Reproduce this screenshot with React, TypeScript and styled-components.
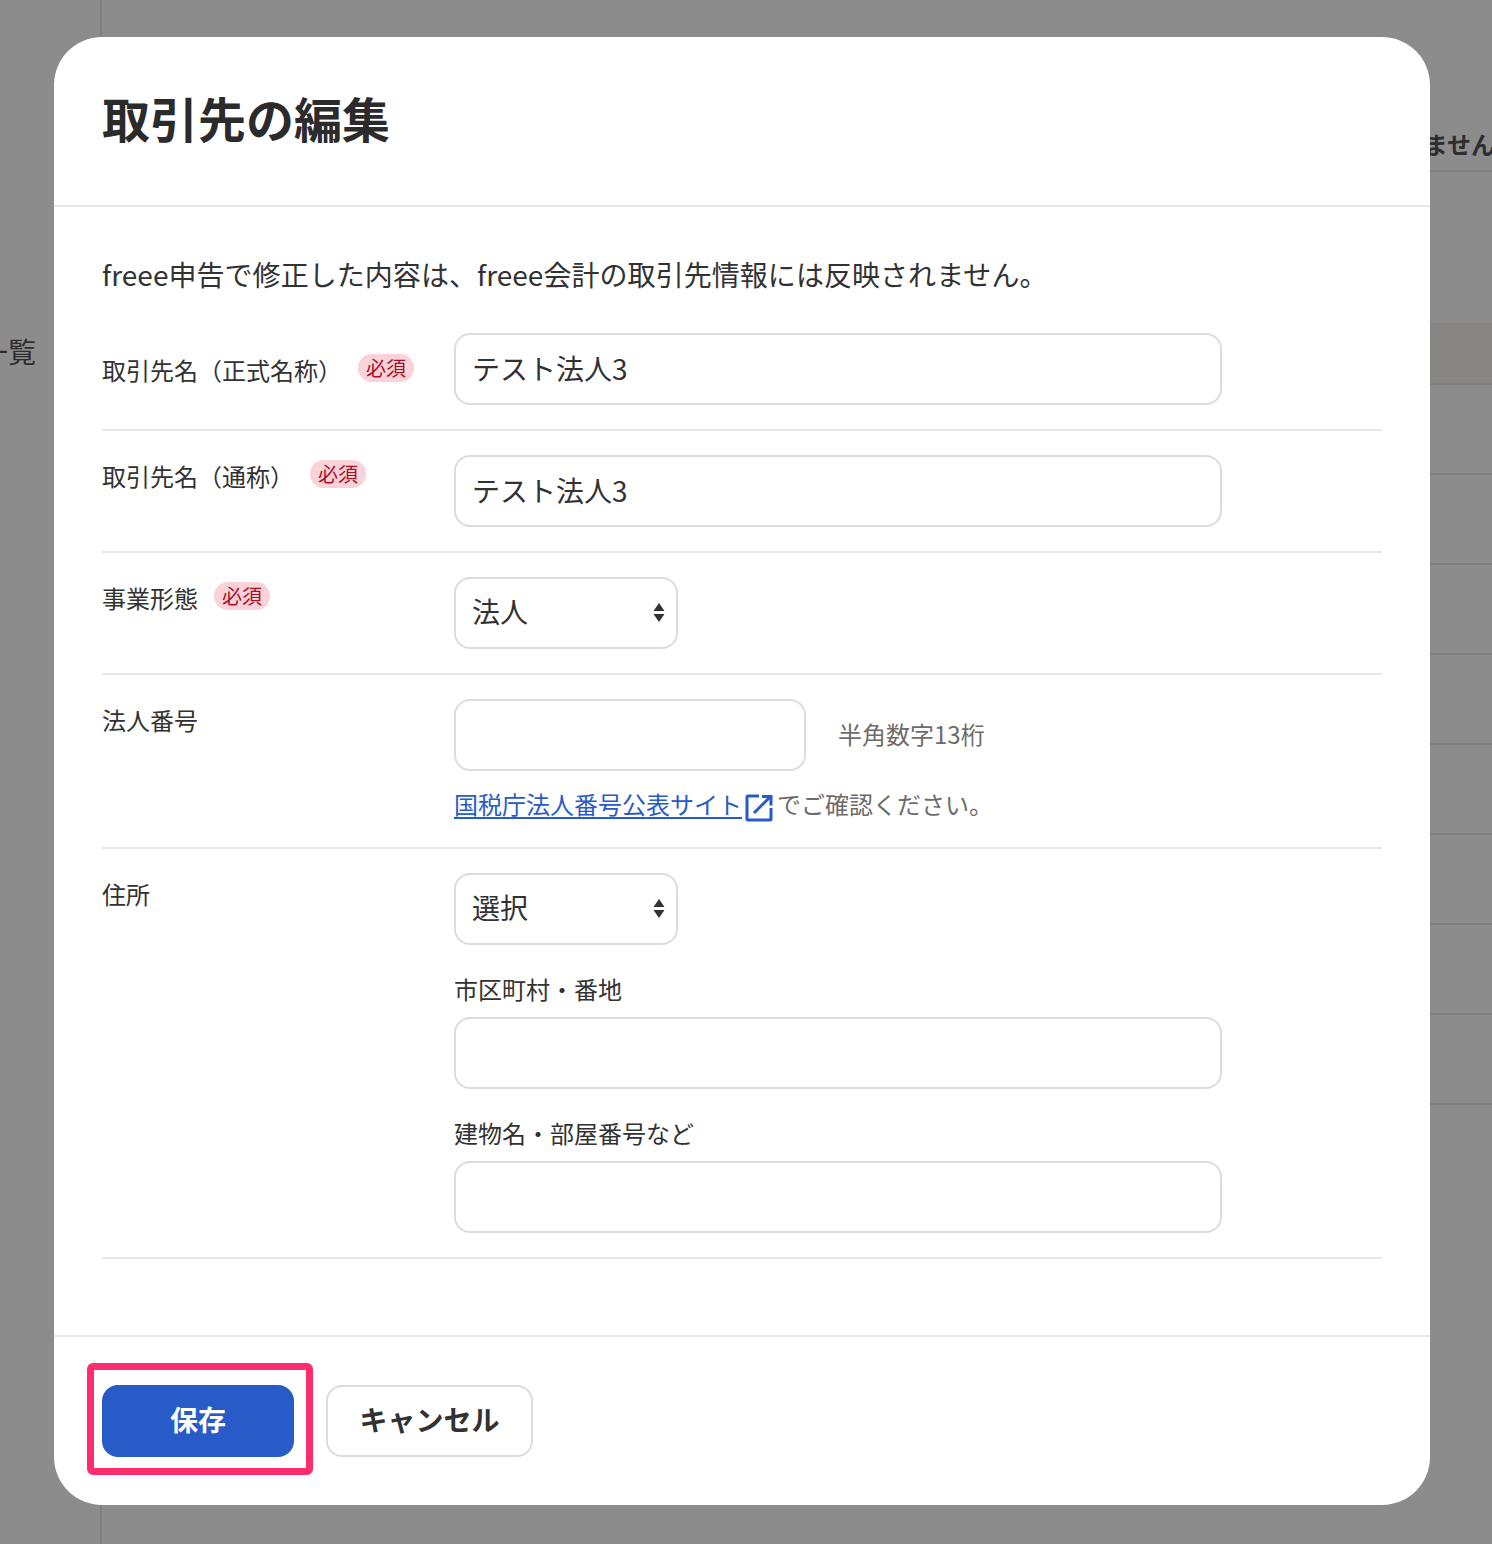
import styled, { createGlobalStyle } from "styled-components";

const GlobalStyle = createGlobalStyle`
  html, body {
    margin: 0;
    padding: 0;
  }
  body {
    font-family: "Noto Sans CJK JP", "Liberation Sans", sans-serif;
    color: #323232;
  }
  * {
    box-sizing: border-box;
  }
`;

const Page = styled.div`
  position: relative;
  display: grid;
  grid-template-columns: 102px 1fr;
  width: 1492px;
  height: 1544px;
  overflow: hidden;
  background: #fff;
`;

const Sidebar = styled.aside`
  display: flex;
  justify-content: flex-end;
  padding: 330px 64px 0 0;
  border-right: 2px solid #e7e7e7;
  overflow: hidden;
`;

const SidebarTitle = styled.div`
  flex: none;
  font-size: 28px;
  line-height: 42px;
  white-space: nowrap;
  color: #555;
`;

const Main = styled.main`
  display: flex;
  flex-direction: column;
  min-width: 0;
`;

const TableHead = styled.div`
  display: flex;
  justify-content: flex-end;
  align-items: flex-end;
  height: 172px;
  margin-bottom: 151px;
  padding-bottom: 6px;
  border-bottom: 2px solid #e7e7e7;
  overflow: hidden;
`;

const HeadCell = styled.div`
  flex: none;
  margin-right: -3px;
  font-size: 24px;
  font-weight: 700;
  line-height: 40px;
  white-space: nowrap;
  color: #555;
`;

const TableRow = styled.div<{ $active?: boolean }>`
  height: ${(p) => (p.$active ? 62 : 90)}px;
  border-bottom: 2px solid #e7e7e7;
  background: ${(p) => (p.$active ? "#f8f3f3" : "#fff")};
`;

const Overlay = styled.div`
  position: absolute;
  inset: 0;
  padding: 37px 62px 39px 54px;
  background: rgba(0, 0, 0, 0.45);
`;

const Modal = styled.form`
  display: flex;
  flex-direction: column;
  height: 100%;
  border-radius: 48px;
  background: #fff;
  overflow: hidden;
`;

const ModalHeader = styled.header`
  flex: none;
  display: flex;
  align-items: center;
  height: 170px;
  padding: 0 48px 8px;
  border-bottom: 2px solid #e7e7e7;
`;

const ModalTitle = styled.h1`
  margin: 0;
  font-size: 48px;
  font-weight: 700;
  line-height: 72px;
  color: #2b2b2b;
`;

const ModalBody = styled.div`
  flex: 1;
  min-height: 0;
  padding: 46px 48px 0;
`;

const Notice = styled.p`
  margin: 0 0 38px;
  font-size: 28px;
  line-height: 42px;
  letter-spacing: 0.05px;
  color: #323232;
`;

const FormRow = styled.div`
  display: grid;
  grid-template-columns: 352px 1fr;
  padding: 24px 0;
  border-bottom: 2px solid #e7e7e7;
  &:first-of-type {
    padding-top: 0;
  }
`;

const LabelCell = styled.div<{ $offset?: number }>`
  display: flex;
  align-items: flex-start;
  gap: 16px;
  padding-top: ${(p) => p.$offset ?? 3}px;
`;

const Label = styled.label`
  font-size: 24px;
  line-height: 36px;
  color: #323232;
`;

const RequiredBadge = styled.span`
  flex: none;
  width: 56px;
  height: 28px;
  margin-top: 2px;
  border-radius: 14px;
  background: #fad2d8;
  font-size: 20px;
  line-height: 27px;
  text-align: center;
  color: #a81029;
`;

const FieldCell = styled.div`
  display: flex;
  flex-direction: column;
  align-items: flex-start;
  min-width: 0;
`;

const TextInput = styled.input<{ $width?: number }>`
  display: block;
  width: ${(p) => p.$width ?? 768}px;
  height: 72px;
  padding: 0 16px 2px;
  border: 2px solid #dcdcdc;
  border-radius: 16px;
  outline: none;
  background: #fff;
  font-family: inherit;
  font-size: 28px;
  color: #323232;
`;

const SelectWrap = styled.div`
  position: relative;
  width: 224px;
  height: 72px;
`;

const Select = styled.select`
  display: block;
  width: 100%;
  height: 100%;
  padding: 0 40px 4px 16px;
  border: 2px solid #dcdcdc;
  border-radius: 16px;
  outline: none;
  appearance: none;
  background: #fff;
  font-family: inherit;
  font-size: 28px;
  color: #323232;
`;

const SelectArrows = styled.svg`
  position: absolute;
  top: 26px;
  right: 13px;
  width: 12px;
  height: 19px;
  pointer-events: none;
`;

const InlineField = styled.div`
  display: flex;
  align-items: center;
  gap: 32px;
`;

const Hint = styled.span`
  margin-bottom: 2px;
  font-size: 24px;
  line-height: 36px;
  color: #6e6b68;
`;

const HelpLine = styled.div`
  display: flex;
  align-items: center;
  margin-top: 15px;
  padding-bottom: 1px;
  font-size: 24px;
  line-height: 36px;
  color: #6e6b68;
`;

const ExternalLink = styled.a`
  color: #285ac8;
  text-decoration: underline;
  text-underline-offset: 3px;
`;

const ExternalIcon = styled.svg`
  flex: none;
  width: 28px;
  height: 28px;
  margin: 8px 4px 0 3px;
`;

const SubLabel = styled.label`
  margin: 26px 0 10px;
  font-size: 24px;
  line-height: 36px;
  color: #323232;
`;

const ModalFooter = styled.footer`
  flex: none;
  display: flex;
  gap: 32px;
  height: 170px;
  padding: 48px;
  border-top: 2px solid #e7e7e7;
`;

const SaveWrap = styled.div`
  position: relative;
`;

const Highlight = styled.div`
  position: absolute;
  top: -22px;
  left: -15px;
  right: -19px;
  bottom: -18px;
  border: 7px solid #ff2d6b;
  border-radius: 6px;
  pointer-events: none;
`;

const Button = styled.button<{ $primary?: boolean }>`
  display: block;
  min-width: ${(p) => (p.$primary ? 192 : 0)}px;
  height: 72px;
  padding: 0 31.5px 4px;
  border: 2px solid ${(p) => (p.$primary ? "#285ac8" : "#dcdcdc")};
  border-radius: 16px;
  background: ${(p) => (p.$primary ? "#285ac8" : "#fff")};
  font-family: inherit;
  font-size: 28px;
  font-weight: 700;
  color: ${(p) => (p.$primary ? "#fff" : "#323232")};
`;

const rowKeys = [0, 1, 2, 3, 4, 5, 6, 7];

export default function App() {
  return (
    <>
      <GlobalStyle />
      <Page>
        <Sidebar>
          <SidebarTitle>取引先一覧</SidebarTitle>
        </Sidebar>
        <Main>
          <TableHead>
            <HeadCell>ありません</HeadCell>
          </TableHead>
          <TableRow $active />
          {rowKeys.map((k) => (
            <TableRow key={k} />
          ))}
        </Main>
        <Overlay>
          <Modal>
            <ModalHeader>
              <ModalTitle>取引先の編集</ModalTitle>
            </ModalHeader>
            <ModalBody>
              <Notice>
                freee申告で修正した内容は、freee会計の取引先情報には反映されません。
              </Notice>
              <FormRow>
                <LabelCell $offset={19}>
                  <Label>取引先名（正式名称）</Label>
                  <RequiredBadge>必須</RequiredBadge>
                </LabelCell>
                <FieldCell>
                  <TextInput defaultValue="テスト法人3" />
                </FieldCell>
              </FormRow>
              <FormRow>
                <LabelCell>
                  <Label>取引先名（通称）</Label>
                  <RequiredBadge>必須</RequiredBadge>
                </LabelCell>
                <FieldCell>
                  <TextInput defaultValue="テスト法人3" />
                </FieldCell>
              </FormRow>
              <FormRow>
                <LabelCell>
                  <Label>事業形態</Label>
                  <RequiredBadge>必須</RequiredBadge>
                </LabelCell>
                <FieldCell>
                  <SelectWrap>
                    <Select defaultValue="法人">
                      <option>法人</option>
                      <option>個人</option>
                    </Select>
                    <SelectArrows viewBox="0 0 12 19">
                      <path d="M6 0l5.5 8H.5z" fill="#323232" />
                      <path d="M6 19l5.5-8H.5z" fill="#323232" />
                    </SelectArrows>
                  </SelectWrap>
                </FieldCell>
              </FormRow>
              <FormRow>
                <LabelCell>
                  <Label>法人番号</Label>
                </LabelCell>
                <FieldCell>
                  <InlineField>
                    <TextInput $width={352} />
                    <Hint>半角数字13桁</Hint>
                  </InlineField>
                  <HelpLine>
                    <ExternalLink href="#">国税庁法人番号公表サイト</ExternalLink>
                    <ExternalIcon viewBox="0 0 28 28" fill="none" stroke="#285ac8" strokeWidth="3">
                      <path d="M14 2H3a1 1 0 0 0-1 1v22a1 1 0 0 0 1 1h22a1 1 0 0 0 1-1V14" />
                      <path d="M9 19L25.5 2.5M17 2.5h9v9" />
                    </ExternalIcon>
                    でご確認ください。
                  </HelpLine>
                </FieldCell>
              </FormRow>
              <FormRow>
                <LabelCell>
                  <Label>住所</Label>
                </LabelCell>
                <FieldCell>
                  <SelectWrap>
                    <Select defaultValue="選択">
                      <option>選択</option>
                    </Select>
                    <SelectArrows viewBox="0 0 12 19">
                      <path d="M6 0l5.5 8H.5z" fill="#323232" />
                      <path d="M6 19l5.5-8H.5z" fill="#323232" />
                    </SelectArrows>
                  </SelectWrap>
                  <SubLabel>市区町村・番地</SubLabel>
                  <TextInput />
                  <SubLabel>建物名・部屋番号など</SubLabel>
                  <TextInput />
                </FieldCell>
              </FormRow>
            </ModalBody>
            <ModalFooter>
              <SaveWrap>
                <Button type="button" $primary>
                  保存
                </Button>
                <Highlight />
              </SaveWrap>
              <Button type="button">キャンセル</Button>
            </ModalFooter>
          </Modal>
        </Overlay>
      </Page>
    </>
  );
}
